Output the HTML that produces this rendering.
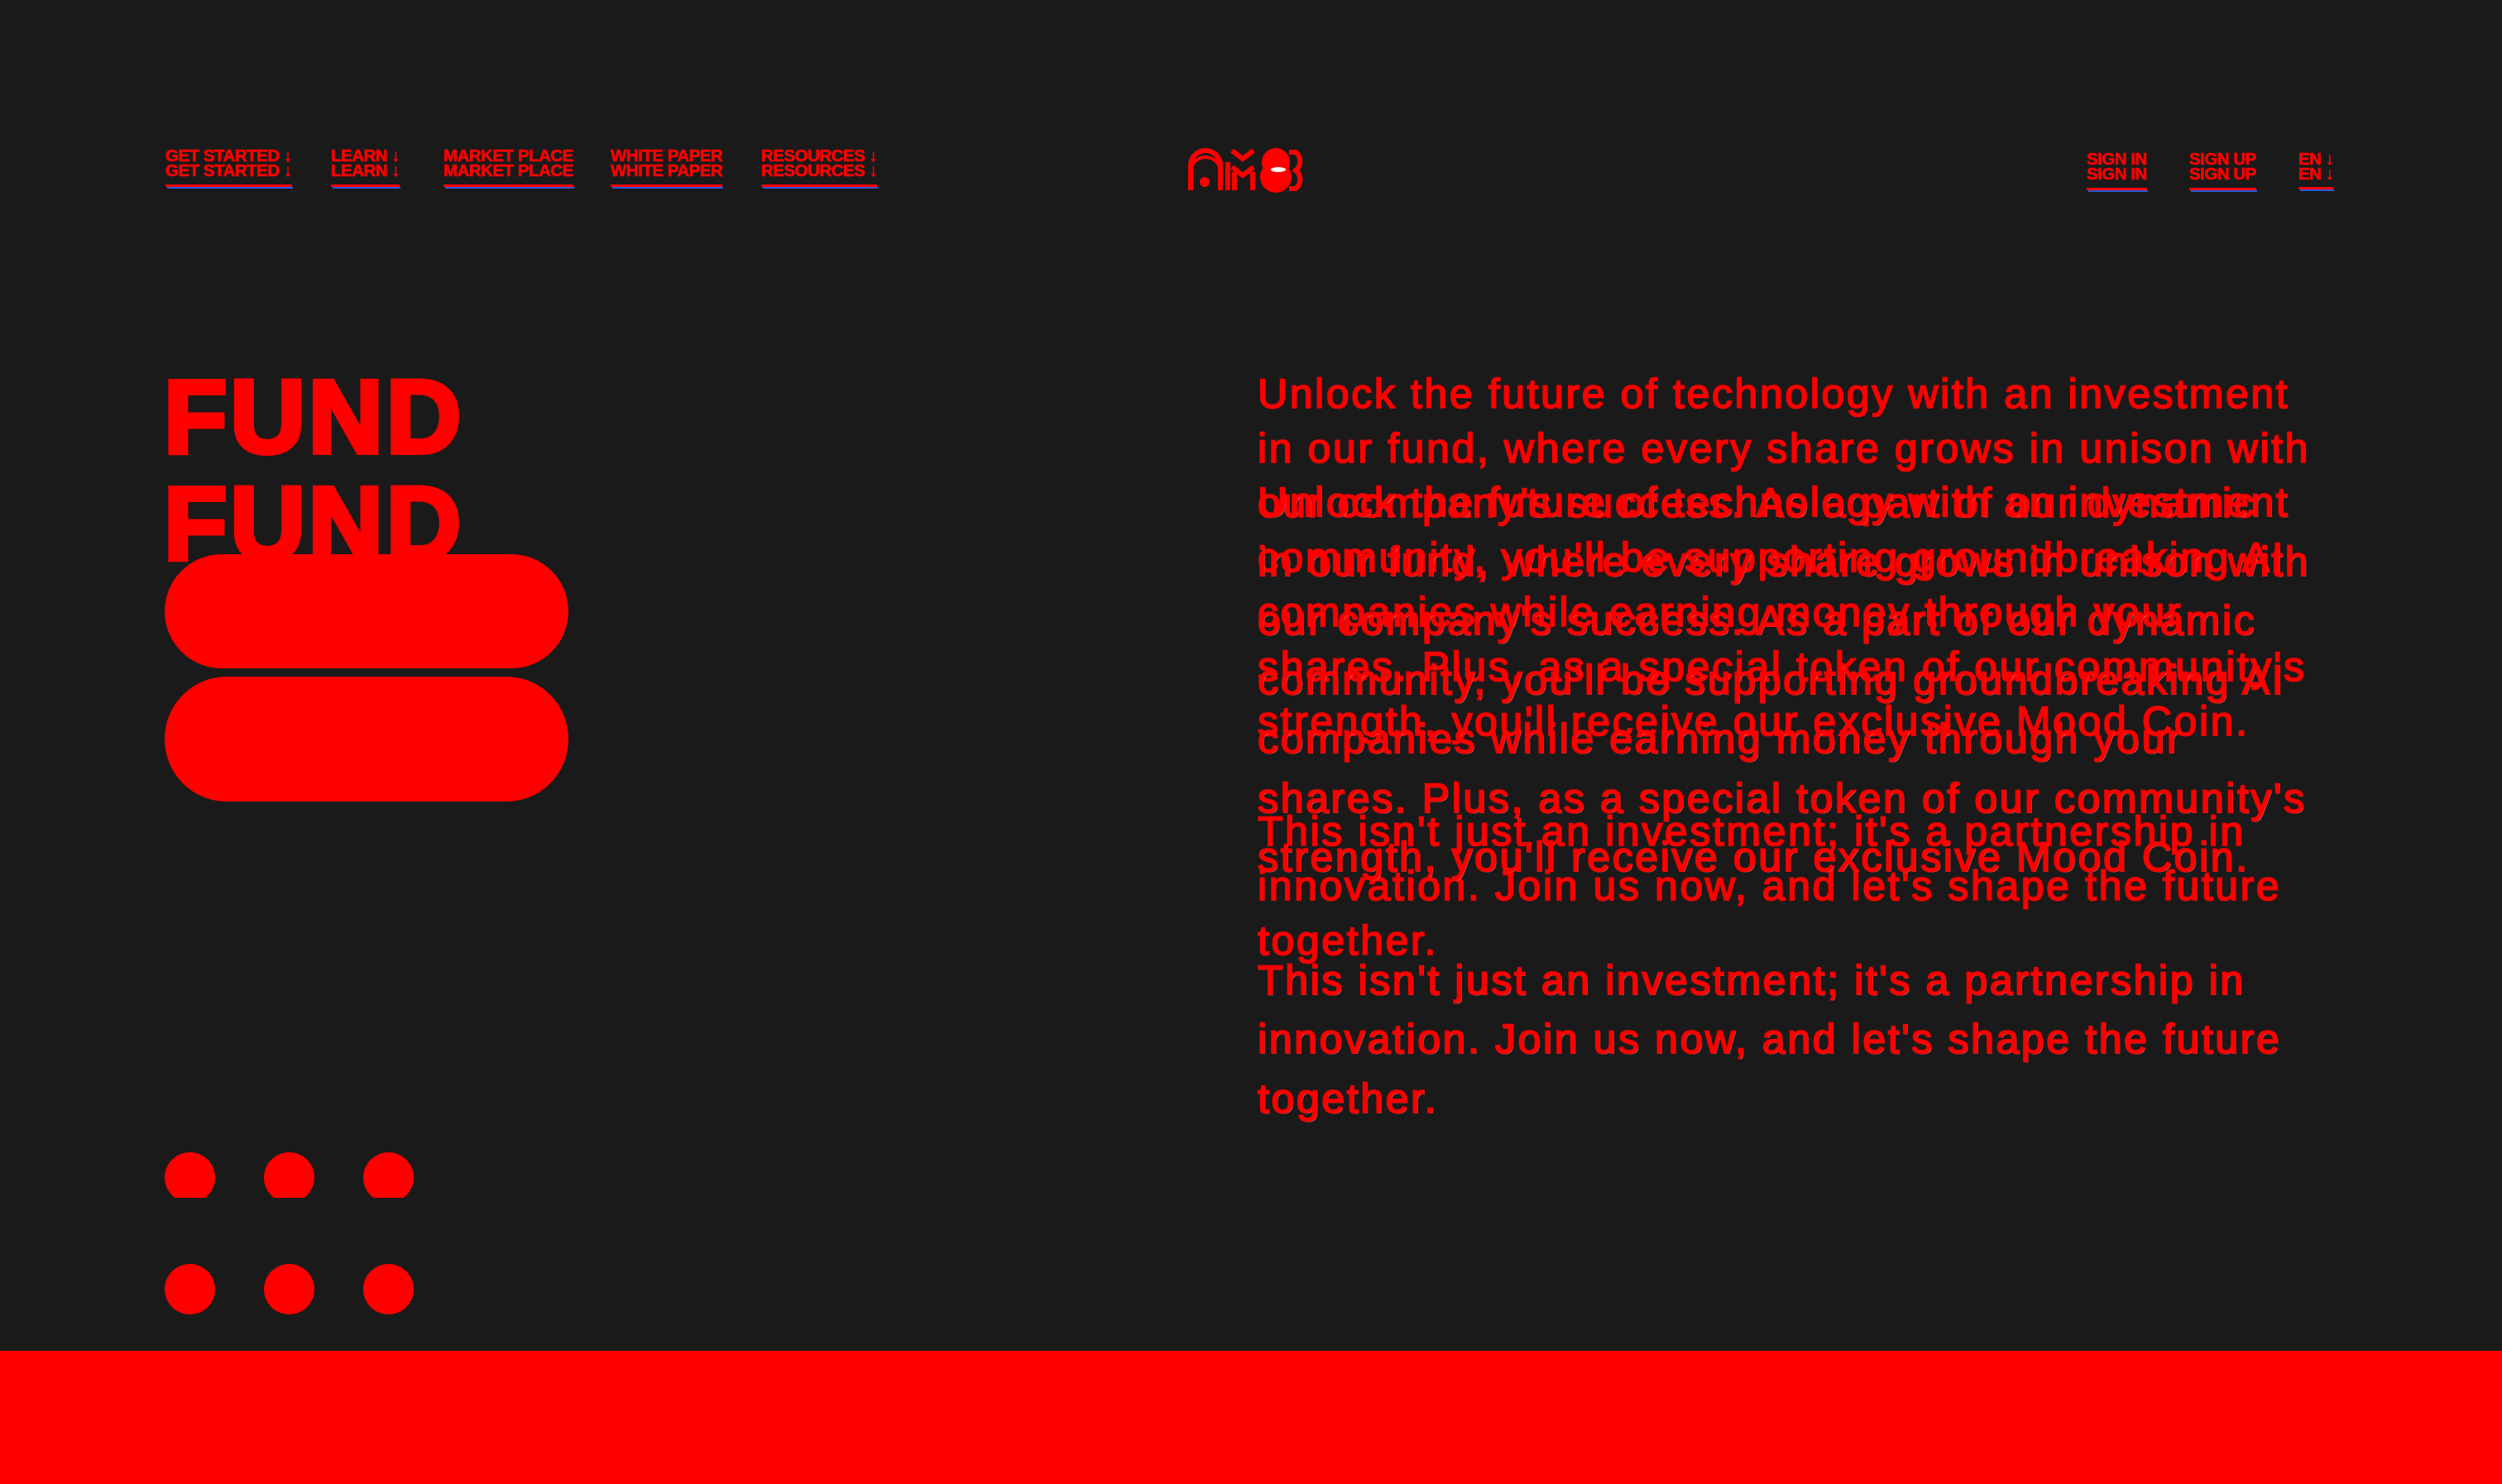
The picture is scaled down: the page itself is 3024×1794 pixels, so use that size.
<!DOCTYPE html>
<html><head><meta charset="utf-8"><style>
*{margin:0;padding:0;box-sizing:border-box}
html,body{width:3024px;height:1794px;background:#1a1a1a;overflow:hidden;position:relative;font-family:"Liberation Sans",sans-serif;color:#ff0000}
.a{position:absolute}
.nav{position:absolute;font-weight:bold;font-size:20.5px;letter-spacing:-0.5px;white-space:nowrap;line-height:18px;-webkit-text-stroke:0.6px #ff0000}
.nav span{display:block}
.nav i{position:absolute;left:0;right:0;height:3px;background:#ff0000;font-style:normal}
.nav b{position:absolute;left:2px;right:-1px;height:2px;background:#2a5bd7}
.fund{position:absolute;left:198px;font-weight:bold;font-size:125px;line-height:125px;letter-spacing:4px;-webkit-text-stroke:6px #ff0000}
.txt{position:absolute;left:1520px;white-space:nowrap;font-size:50px;letter-spacing:2.6px;-webkit-text-stroke:1.8px #ff0000}
.dot{position:absolute;width:61px;border-radius:50%;background:#ff0000}
</style></head><body>

<div class="nav" style="left:200px;top:180px"><span>GET STARTED ↓</span><span>GET STARTED ↓</span><i style="top:43px"></i><b style="top:46px"></b></div>
<div class="nav" style="left:400px;top:180px"><span>LEARN ↓</span><span>LEARN ↓</span><i style="top:43px"></i><b style="top:46px"></b></div>
<div class="nav" style="left:536px;top:180px"><span>MARKET PLACE</span><span>MARKET PLACE</span><i style="top:43px"></i><b style="top:46px"></b></div>
<div class="nav" style="left:738px;top:180px"><span>WHITE PAPER</span><span>WHITE PAPER</span><i style="top:43px"></i><b style="top:46px"></b></div>
<div class="nav" style="left:920px;top:180px"><span>RESOURCES ↓</span><span>RESOURCES ↓</span><i style="top:43px"></i><b style="top:46px"></b></div>

<div class="nav" style="left:2522px;top:184px"><span>SIGN IN</span><span>SIGN IN</span><i style="top:43px"></i><b style="top:46px"></b></div>
<div class="nav" style="left:2646px;top:184px"><span>SIGN UP</span><span>SIGN UP</span><i style="top:43px"></i><b style="top:46px"></b></div>
<div class="nav" style="left:2778px;top:184px"><span>EN ↓</span><span>EN ↓</span><i style="top:42px"></i><b style="top:45px"></b></div>

<svg class="a" style="left:1434px;top:178px" width="156" height="56" viewBox="0 0 156 56">
<g fill="none" stroke="#ff0000" stroke-width="6">
<path d="M5 52 V22 a18 18 0 0 1 36 0 V52"/>
<path d="M5 52 V30 a18 18 0 0 1 36 0 V52" stroke-width="4"/>
<path d="M50 52 V18"/>
<path d="M55 4 L68 14 L81 4"/>
<path d="M55 24 L68 34 L81 24"/>
<path d="M58 52 V30 M80 52 V30"/>
<path d="M124 6 h8 a14 14 0 0 1 0 22 a14 14 0 0 1 0 22 h-8"/>
</g>
<circle cx="22" cy="42" r="6" fill="#ff0000"/>
<circle cx="108" cy="18" r="17" fill="#ff0000"/>
<circle cx="108" cy="36" r="19" fill="#ff0000"/>
<ellipse cx="111" cy="27" rx="9" ry="3" fill="#fff"/>
</svg>

<div class="fund" style="top:442px">FUND</div>
<div class="fund" style="top:571px">FUND</div>
<div class="a" style="left:199px;top:670px;width:488px;height:138px;border-radius:69px;background:#ff0000"></div>
<div class="a" style="left:199px;top:818px;width:488px;height:151px;border-radius:75px;background:#ff0000"></div>

<div class="txt" style="top:443px;line-height:66px">
<p>Unlock the future of technology with an investment<br>in our fund, where every share grows in unison with<br>our company's success. As a part of our dynamic<br>community, you'll be supporting groundbreaking AI<br>companies while earning money through your<br>shares. Plus, as a special token of our community's<br>strength, you'll receive our exclusive Mood Coin.</p>
<p style="margin-top:67px">This isn't just an investment; it's a partnership in<br>innovation. Join us now, and let's shape the future<br>together.</p>
</div>
<div class="txt" style="top:572px;line-height:71.5px;text-shadow:1px 1px 0 rgba(255,255,255,0.6)">
<p>Unlock the future of technology with an investment<br>in our fund, where every share grows in unison with<br>our company's success. As a part of our dynamic<br>community, you'll be supporting groundbreaking AI<br>companies while earning money through your<br>shares. Plus, as a special token of our community's<br>strength, you'll receive our exclusive Mood Coin.</p>
<p style="margin-top:77px">This isn't just an investment; it's a partnership in<br>innovation. Join us now, and let's shape the future<br>together.</p>
</div>

<div class="dot" style="left:199px;top:1393px;height:61px;clip-path:inset(0 0 6px 0)"></div>
<div class="dot" style="left:319px;top:1393px;height:61px;clip-path:inset(0 0 6px 0)"></div>
<div class="dot" style="left:439px;top:1393px;height:61px;clip-path:inset(0 0 6px 0)"></div>
<div class="dot" style="left:199px;top:1528px;height:61px"></div>
<div class="dot" style="left:319px;top:1528px;height:61px"></div>
<div class="dot" style="left:439px;top:1528px;height:61px"></div>

<div class="a" style="left:0;top:1633px;width:3024px;height:161px;background:#ff0000"></div>
</body></html>
